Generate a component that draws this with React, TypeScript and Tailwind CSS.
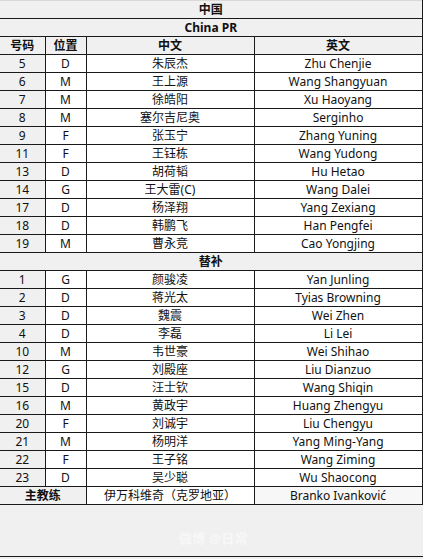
import React from 'react';

type Player = [string, string, string, string];

const starters: Player[] = [
  ['5', 'D', '朱辰杰', 'Zhu Chenjie'],
  ['6', 'M', '王上源', 'Wang Shangyuan'],
  ['7', 'M', '徐皓阳', 'Xu Haoyang'],
  ['8', 'M', '塞尔吉尼奥', 'Serginho'],
  ['9', 'F', '张玉宁', 'Zhang Yuning'],
  ['11', 'F', '王钰栋', 'Wang Yudong'],
  ['13', 'D', '胡荷韬', 'Hu Hetao'],
  ['14', 'G', '王大雷(C)', 'Wang Dalei'],
  ['17', 'D', '杨泽翔', 'Yang Zexiang'],
  ['18', 'D', '韩鹏飞', 'Han Pengfei'],
  ['19', 'M', '曹永竞', 'Cao Yongjing'],
];

const subs: Player[] = [
  ['1', 'G', '颜骏凌', 'Yan Junling'],
  ['2', 'D', '蒋光太', 'Tyias Browning'],
  ['3', 'D', '魏震', 'Wei Zhen'],
  ['4', 'D', '李磊', 'Li Lei'],
  ['10', 'M', '韦世豪', 'Wei Shihao'],
  ['12', 'G', '刘殿座', 'Liu Dianzuo'],
  ['15', 'D', '汪士钦', 'Wang Shiqin'],
  ['16', 'M', '黄政宇', 'Huang Zhengyu'],
  ['20', 'F', '刘诚宇', 'Liu Chengyu'],
  ['21', 'M', '杨明洋', 'Yang Ming-Yang'],
  ['22', 'F', '王子铭', 'Wang Ziming'],
  ['23', 'D', '吴少聪', 'Wu Shaocong'],
];

const font = { fontFamily: '"Noto Sans", "Noto Sans CJK SC", sans-serif' };

const cell = 'h-[18px] p-0 border border-[#1a1a1a] text-center align-middle leading-none';

function PlayerRow({ p }: { p: Player }) {
  return (
    <tr>
      <td className={`${cell} border-l-0 bg-[#f0f0f0]`}>{p[0]}</td>
      <td className={`${cell} bg-white`}>{p[1]}</td>
      <td className={`${cell} bg-white`}>{p[2]}</td>
      <td className={`${cell} bg-white`}>{p[3]}</td>
    </tr>
  );
}

export default function App() {
  return (
    <div className="w-[423px] h-[559px] bg-[#f0f0f0] text-[12px] text-[#111] flex flex-col" style={font}>
      <table className="w-[422px] table-fixed border-collapse">
        <colgroup>
          <col className="w-[45px]" />
          <col className="w-[41px]" />
          <col className="w-[168px]" />
          <col className="w-[168px]" />
        </colgroup>
        <tbody>
          <tr>
            <td colSpan={4} className={`${cell} border-l-0 border-t-[#d8d8d8] bg-[#f0f0f0] font-bold`}>中国</td>
          </tr>
          <tr>
            <td colSpan={4} className={`${cell} border-l-0 bg-[#f0f0f0] font-bold`}>China PR</td>
          </tr>
          <tr className="font-bold">
            <td className={`${cell} border-l-0 bg-[#f0f0f0]`}>号码</td>
            <td className={`${cell} bg-[#f0f0f0]`}>位置</td>
            <td className={`${cell} bg-[#f0f0f0]`}>中文</td>
            <td className={`${cell} bg-[#f0f0f0]`}>英文</td>
          </tr>
          {starters.map(p => <PlayerRow key={p[0]} p={p} />)}
          <tr>
            <td colSpan={4} className={`${cell} border-l-0 bg-[#f0f0f0] font-bold`}>替补</td>
          </tr>
          {subs.map(p => <PlayerRow key={p[0]} p={p} />)}
          <tr>
            <td colSpan={2} className={`${cell} border-l-0 bg-[#f0f0f0] font-bold`}>主教练</td>
            <td className={`${cell} bg-white`}>伊万科维奇（克罗地亚）</td>
            <td className={`${cell} bg-[#f7f7f7]`}>Branko Ivanković</td>
          </tr>
        </tbody>
      </table>
      <div className="flex-1 flex items-end justify-center pb-[8px]">
        <span className="ml-[4px] text-[13px] text-white/50 font-bold tracking-wide">微博 @日常</span>
      </div>
      <div className="h-[1px] bg-[#1a1a1a] mb-[2px]" />
    </div>
  );
}
